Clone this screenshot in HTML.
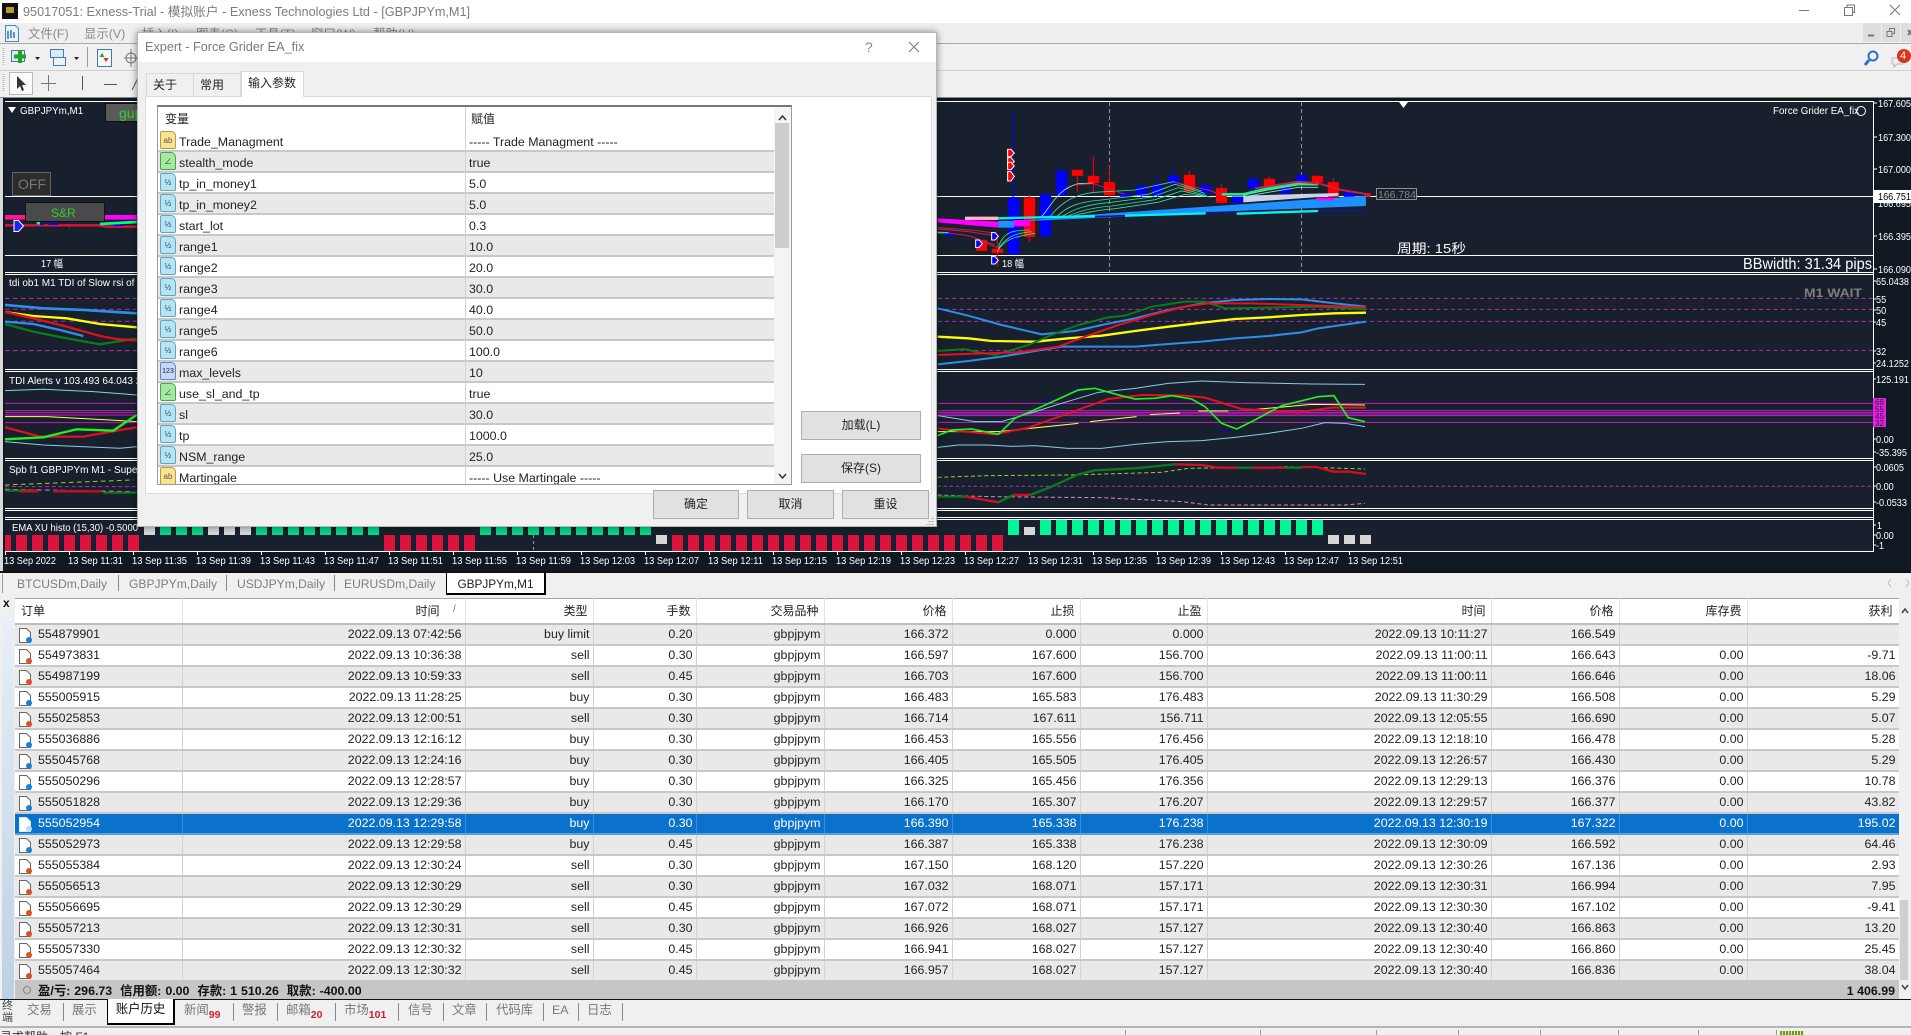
<!DOCTYPE html>
<html lang="zh"><head><meta charset="utf-8"><title>95017051: Exness-Trial</title>
<style>
*{box-sizing:border-box}
html,body{margin:0;padding:0;width:1911px;height:1035px;overflow:hidden;background:#f0f0f0;font-family:"Liberation Sans","Noto Sans CJK SC",sans-serif;font-size:12.4px;color:#222}
.a{position:absolute}
.t{position:absolute;white-space:nowrap}
#title{left:23px;top:4px;font-size:12.7px;color:#7c7c7c;line-height:16px}
.menu{top:26px;font-size:12.4px;color:#8a8a8a;line-height:16px}
#charts{position:absolute;left:0;top:0;z-index:1}
#charts text{font-family:"Liberation Sans","Noto Sans CJK SC",sans-serif;fill:#fff;font-size:10px}
#dlg{position:absolute;left:137px;top:32px;width:800px;height:495px;background:#f0f0f0;border:1px solid #b5b5b5;z-index:5;box-shadow:0 0 7px rgba(0,0,0,.45)}
#dlgt{position:absolute;left:0;top:0;width:798px;height:29px;background:#fff}
.tab{position:absolute;top:40px;height:24px;background:#f0f0f0;border:1px solid #d9d9d9;border-bottom:none;text-align:left;padding-left:6px;line-height:22px;font-size:12px;color:#222}
#panel{position:absolute;left:7px;top:63px;width:787px;height:398px;background:#fff;border:1px solid #dcdcdc}
#grid{position:absolute;left:11px;top:8px;width:635px;height:380px;border:1px solid #9a9a9a;border-top:2px solid #777;background:#fff;overflow:hidden}
#gh{position:absolute;left:0;top:0;width:616px;height:24px;line-height:25px;font-size:12px}
#rows{position:absolute;left:0;top:24px;width:616px}
.r{position:relative;height:21px;border-bottom:2px solid #c8c8c8;line-height:22px;background:#fff;white-space:nowrap}
.r.g{background:#e9e9e9}
.r b{font-weight:normal;position:absolute;left:21px;top:0}
.r u{text-decoration:none;position:absolute;left:311px;top:0}
.ic{position:absolute;left:2px;top:0;width:16px;height:18px;border:1px solid #5fa5bf;background:#b7e4f2;font-style:normal;font-size:8px;line-height:17px;text-align:center;color:#246;border-radius:2px 5px 2px 2px}
.ic.y{background:#f7e595;border-color:#b8993a;color:#654}
.ic.s{background:#a6e8a0;border-color:#4aa34a;color:#143}
.ic.n{background:#c4d8f6;border-color:#6186bd;color:#124;font-size:7px}
#vdiv{position:absolute;left:307px;top:0;width:1px;height:380px;background:#d2d2d2}
.btn{position:absolute;background:#e1e1e1;border:1px solid #adadad;text-align:center;font-size:12px;line-height:26px;color:#222}
#tbl{position:absolute;left:15px;top:598px;width:1884px;border-collapse:collapse;table-layout:fixed;background:#fff;z-index:2}
#tbl th{height:25px;font-weight:normal;font-size:12px;text-align:right;padding:0 5px 0 0;border-right:1px solid #e3e3e3;border-top:1px solid #a6a6a6;border-bottom:2px solid #bdbdbd;background:#fff;color:#222}
#tbl td{height:21px;padding:0 3px 0 0;text-align:right;border-right:1px solid #d2d2d2;border-bottom:2px solid #c8c8c8;line-height:18px;white-space:nowrap;overflow:hidden}
#tbl tr.g td{background:#e9e9e9}
#tbl tr.sel td{background:#0a72cc;color:#fff;border-right-color:#3a8dd6;border-bottom-color:#5a9fd8}
#tbl td:first-child{text-align:left;padding-left:23px;position:relative}
#tbl th:first-child{text-align:left;padding-left:6px}
#tbl td svg{position:absolute;left:3px;top:2px}
.ct{position:absolute;top:574px;height:22px;line-height:21px;color:#7d7d7d;font-size:12.1px;z-index:2}
.bt{position:absolute;top:1000px;height:22px;line-height:20px;color:#777;font-size:12.4px;z-index:2}
.bt sub{color:#d3202c;font-size:10.5px;font-weight:bold;vertical-align:-4px;line-height:0}
.sp{position:absolute;top:1003px;width:1px;height:18px;background:#888;z-index:2}
.sb{position:absolute;top:1030px;width:1px;height:5px;background:#999}
</style></head><body>

<!-- title bar -->
<div class="a" style="left:0;top:0;width:1911px;height:23px;background:#fff"></div>
<div class="t" id="title">95017051: Exness-Trial - 模拟账户 - Exness Technologies Ltd - [GBPJPYm,M1]</div>
<div class="a" style="left:2px;top:3px;width:16px;height:16px;background:#111"></div>
<div class="a" style="left:6px;top:7px;width:8px;height:6px;background:#b89a25"></div>
<svg class="a" style="left:1790px;top:0" width="121" height="23"><path d="M9 10.5h10M54.5 7.5h8v8h-8zM57 7.5v-2.500h7.500v7.500h-2M100 5l10 10M110 5l-10 10" fill="none" stroke="#777"/></svg>

<!-- menu bar -->
<div class="a" style="left:0;top:23px;width:1911px;height:20px;background:#efefef"></div>
<div class="a" style="left:0;top:43px;width:1911px;height:1px;background:#aaa"></div>
<svg class="a" style="left:4px;top:25px" width="16" height="17"><path d="M1.500 .5h10l3 3v13h-13z" fill="#eaf2fb" stroke="#4b84c4"/><path d="M4 6v8M7 5v8M10 7v6" stroke="#3070b0" stroke-width="1.500"/></svg>
<div class="t menu" style="left:28px">文件(F)</div><div class="t menu" style="left:84px">显示(V)</div>
<div class="t menu" style="left:142px">插入(I)</div><div class="t menu" style="left:196px">图表(C)</div><div class="t menu" style="left:255px">工具(T)</div><div class="t menu" style="left:311px">窗口(W)</div><div class="t menu" style="left:373px">帮助(H)</div>
<div class="a" style="left:1863px;top:23px;width:18px;height:19px;background:#dedede"></div>
<div class="a" style="left:1882px;top:23px;width:18px;height:19px;background:#dedede"></div>
<div class="a" style="left:1901px;top:23px;width:10px;height:19px;background:#dedede"></div>
<svg class="a" style="left:1863px;top:23px" width="48" height="19"><path d="M5 12.500h6" stroke="#777" stroke-width="2"/><path d="M24 8.500h5v5h-5zM26.500 8v-2.500h5v5h-2" fill="none" stroke="#777"/><path d="M45 7l4 5M49 7l-4 5" stroke="#777" stroke-width="2"/></svg>

<!-- toolbars -->
<div class="a" style="left:0;top:70px;width:1911px;height:1px;background:#d0d0d0"></div>
<svg class="a" style="left:0;top:44px" width="180" height="53">
<path d="M3.500 4v18M3.500 30v18" stroke="#bbb" stroke-dasharray="1 1" stroke-width="2"/>
<rect x="11.500" y="6.500" width="13" height="11" fill="#dbe9f8" stroke="#4579b5"/>
<path d="M20 6v13M14 12.500h12" stroke="#1ea51e" stroke-width="4"/>
<path d="M35 13h5l-2.500 3z" fill="#222"/>
<rect x="50.500" y="5.500" width="13" height="8" fill="#dbe9f8" stroke="#4579b5"/><rect x="53.500" y="13.500" width="12" height="8" fill="#eef4fb" stroke="#4579b5"/>
<path d="M74 13h5l-2.500 3z" fill="#222"/>
<path d="M87.500 3v20" stroke="#999"/>
<rect x="97.500" y="5.500" width="14" height="17" fill="#f4f8fd" stroke="#4579b5"/>
<path d="M102 9l-2.500 4h5z" fill="#1ea51e"/><path d="M106 18l-2.500-4h5z" fill="#d2341e"/>
<circle cx="131" cy="14" r="5" fill="none" stroke="#777"/><path d="M131 5v18M124 14h14" stroke="#777"/>
<rect x="9.500" y="28.500" width="23" height="22" fill="#fafafa" stroke="#b8b8b8"/>
<path d="M17 32l0 13 3-3 2 5 2-1-2-5h4z" fill="#333"/>
<path d="M48.500 31v16M41 39.500h15" stroke="#777"/><path d="M82.500 32v14" stroke="#555"/><path d="M104 40.500h13" stroke="#555"/><path d="M132 46l6-12" stroke="#555"/>
</svg>
<svg class="a" style="left:1860px;top:48px" width="51" height="20">
<circle cx="13" cy="8" r="4.500" fill="none" stroke="#2a6fc9" stroke-width="2"/><path d="M9 12l-4 5" stroke="#2a6fc9" stroke-width="3"/>
<path d="M32 10h11v6h-6l-3 3v-3h-2z" fill="#eee" stroke="#bbb"/>
<circle cx="44" cy="8" r="7" fill="#d9341e"/></svg>
<div class="t" style="left:1900px;top:50px;color:#fff;font-size:11px;line-height:13px">4</div>

<!-- charts -->
<svg id="charts" width="1911" height="1035" viewBox="0 0 1911 1035">
<defs>
<pattern id="pr" patternUnits="userSpaceOnUse" width="16" height="40" x="0" y="0"><rect width="11" height="40" fill="#dc143c"/></pattern>
<pattern id="pg" patternUnits="userSpaceOnUse" width="16" height="40" x="0" y="0"><rect width="11" height="40" fill="#05f59b"/></pattern>
<pattern id="pd" patternUnits="userSpaceOnUse" width="16" height="40" x="0" y="0"><rect width="11" height="40" fill="#00d888"/></pattern>
<pattern id="pk" patternUnits="userSpaceOnUse" width="16" height="40" x="0" y="0"><rect width="11" height="40" fill="#d6d6d6"/></pattern>
</defs>
<rect x="0" y="97" width="1911" height="476" fill="#101822"/>
<rect x="0" y="97" width="3" height="476" fill="#d8d8d8"/>
<rect x="0" y="97" width="1911" height="1" fill="#888"/>
<rect x="5" y="101" width="1868" height="451" fill="#17202c"/>

<!-- horizontal frames -->
<g fill="#fff">
<rect x="5" y="101" width="1868" height="1"/><rect x="5" y="196" width="1868" height="1"/><rect x="5" y="255" width="1868" height="1"/>
<rect x="5" y="272" width="1868" height="1"/><rect x="5" y="274" width="1868" height="1"/>
<rect x="5" y="369" width="1868" height="1"/><rect x="5" y="371" width="1868" height="1"/>
<rect x="5" y="458" width="1868" height="1"/><rect x="5" y="460" width="1868" height="1"/>
<rect x="5" y="508" width="1868" height="1"/><rect x="5" y="510" width="1868" height="1"/>
<rect x="5" y="517" width="1868" height="1"/><rect x="5" y="519" width="1868" height="1"/>
<rect x="5" y="551" width="1868" height="1"/><rect x="1873" y="101" width="1" height="451"/>
</g>

<!-- period separators -->
<path d="M1109.500 102v170M1301.500 102v170" stroke="#8a8f95" stroke-dasharray="4 3"/>
<path d="M533.500 535v16" stroke="#8a8f95" stroke-dasharray="3 3"/>

<!-- left panels (zoom coordinates) -->
<g transform="translate(0,100) scale(.3333)" fill="none">
<path d="M15 352H310" stroke="#ff1493" stroke-width="14"/><path d="M310 352H410" stroke="#ff00ff" stroke-width="14"/>
<path d="M15 376H300L320 380H410" stroke="#dc143c" stroke-width="7"/>
<path d="M110 372h22M145 372h30M340 376h30" stroke="#0000ff" stroke-width="5"/><path d="M110 370h10M300 372L410 366" stroke="#00ff7f" stroke-width="8"/>
<path d="M208 372v12" stroke="#dc143c" stroke-width="3"/>
<path d="M15 595H410M15 628H410M15 664H410M15 752H410" stroke="#b030b0" stroke-width="3" stroke-dasharray="14 10"/>
<path d="M15 615L130 625L250 630L410 640" stroke="#2d8fe8" stroke-width="8"/>
<path d="M15 636L100 648L200 655L300 672L410 682" stroke="#ffff00" stroke-width="7"/>
<path d="M15 665L100 672L180 690L250 708" stroke="#2d8fe8" stroke-width="7"/>
<path d="M15 672L100 695L200 715L300 733L350 725L410 716" stroke="#0a7a1a" stroke-width="7"/>
<path d="M15 636L100 655L200 680L300 708L350 717L410 722" stroke="#e01020" stroke-width="7"/>
<path d="M15 872L130 868L280 875L410 885M15 1025L130 1035L360 1045L410 1040" stroke="#87cde8" stroke-width="3"/>
<path d="M15 910H410M15 932H410M15 938H410M15 945H410M15 968H410" stroke="#c020c0" stroke-width="3"/>
<path d="M15 950L140 950L330 960L410 965" stroke="#ffff66" stroke-width="3"/>
<path d="M15 982L120 1010L250 1010L350 992L410 982" stroke="#e01020" stroke-width="7"/>
<path d="M15 1018L130 1012L230 988L340 992L410 945" stroke="#22ee22" stroke-width="7"/>
<path d="M15 1155L400 1140" stroke="#9acd32" stroke-width="3" stroke-dasharray="14 10"/>
<path d="M15 1160H410" stroke="#b030b0" stroke-width="3" stroke-dasharray="12 8"/>
<path d="M15 1168L400 1175" stroke="#e088c0" stroke-width="3" stroke-dasharray="14 10"/>
<path d="M15 1172H110M160 1174H250M310 1178H410" stroke="#0a7a1a" stroke-width="7"/><path d="M60 1174H115M160 1174H305" stroke="#c01020" stroke-width="7"/>
</g>
<path d="M14 220.500h4.500l5 5.500-5 5.500H14z" fill="#2020ff" stroke="#fff"/>

<!-- main candles (zoom coordinates) -->
<g transform="translate(935,105) scale(.3333)">
<g fill="#0000ff" stroke="#0000ff">
<path d="M234.500 18V448" stroke-width="3"/><rect x="219" y="278" width="33" height="170"/>
<path d="M331 268V405" stroke-width="3"/><rect x="315" y="268" width="33" height="124"/>
<path d="M379 185V270" stroke-width="3"/><rect x="363" y="198" width="33" height="72"/>
<rect x="555" y="265" width="33" height="10"/><path d="M619 235V290" stroke-width="3"/><rect x="603" y="243" width="33" height="29"/>
<path d="M667 208V280" stroke-width="3"/><rect x="651" y="240" width="33" height="30"/>
<path d="M715 190V240" stroke-width="3"/><rect x="699" y="213" width="33" height="22"/>
<rect x="795" y="240" width="33" height="25"/><rect x="891" y="275" width="33" height="18"/>
<path d="M955 220V275" stroke-width="3"/><rect x="939" y="222" width="33" height="28"/>
<rect x="1035" y="238" width="33" height="27"/><rect x="1083" y="210" width="33" height="20"/><rect x="1227" y="262" width="33" height="13"/>
<rect x="28" y="385" width="33" height="8"/>
</g>
<g fill="#ff0000" stroke="#ff0000">
<rect x="123" y="405" width="33" height="32"/><path d="M187 400V485" stroke-width="3"/><rect x="171" y="432" width="33" height="11"/>
<path d="M283 268V412" stroke-width="3"/><rect x="267" y="278" width="33" height="117"/>
<path d="M427 195V262" stroke-width="3"/><rect x="411" y="195" width="33" height="17"/>
<path d="M475 155V262" stroke-width="3"/><rect x="459" y="213" width="33" height="21"/>
<path d="M523 182V275" stroke-width="3"/><rect x="507" y="232" width="33" height="38"/>
<path d="M763 198V262" stroke-width="3"/><rect x="747" y="210" width="33" height="50"/>
<path d="M859 238V296" stroke-width="3"/><rect x="843" y="250" width="33" height="43"/>
<path d="M1003 215V250" stroke-width="3"/><rect x="987" y="222" width="33" height="28"/>
<path d="M1147 210V232" stroke-width="3"/><rect x="1131" y="213" width="33" height="19"/>
<path d="M1195 220V275" stroke-width="3"/><rect x="1179" y="232" width="33" height="43"/>
<rect x="1291" y="265" width="16" height="10"/>
</g>
<path d="M8 340L190 350V368L8 352Z" fill="#ff00ff"/>
<path d="M90 335H190V345H90Z" fill="#ffb6c1"/>
<path d="M190 348H237V368H190Z" fill="#1e90ff"/>
<path d="M237 345H285V364H237Z" fill="#ff00ff"/>
<path d="M285 345L480 328L1293 272V303L800 322L570 335L285 348Z" fill="#1e90ff"/>
<path d="M925 272L1210 264V272L925 292Z" fill="#c8d3ea"/><path d="M1145 278H1197V286H1145Z" fill="#ff00ff"/>
<g fill="none">
<path d="M190 340L480 333M570 332L812 325M905 326L1150 318" stroke="#00f5f5" stroke-width="7"/>
<path d="M480 335L570 332M815 323H905M1150 318H1290" stroke="#0a1a90" stroke-width="5"/>
<path d="M8 372L100 380L180 392M8 380L100 392L180 420M8 368L120 376L185 385M120 400L190 430" stroke="#c71f4a" stroke-width="3"/>
<path d="M8 383H40" stroke="#2ee89a" stroke-width="4"/>
<path d="M190 425C205 385,225 375,285 375M190 430C215 395,240 385,290 380M187 440C205 405,235 395,300 385" stroke="#3cdc96" stroke-width="2.500"/>
<path d="M320 335C350 300,370 250,430 236L475 234" stroke="#9fe8e0" stroke-width="2.500"/>
<path d="M345 335C380 290,420 268,480 262L600 255L715 230L800 258" stroke="#3cdc96" stroke-width="2.500"/>
<path d="M365 335C400 300,440 290,500 285L640 268L720 238L810 265" stroke="#3cdc96" stroke-width="2.500"/>
<path d="M380 335C420 310,460 298,520 293L650 276L730 248L815 272" stroke="#3cdc96" stroke-width="2.500"/>
<path d="M395 335C430 318,470 308,530 303L660 284L740 258L820 275" stroke="#3cdc96" stroke-width="2.500"/>
<path d="M405 335C440 325,480 316,540 311L670 292L750 268L830 276" stroke="#3cdc96" stroke-width="2.500"/>
<path d="M860 268H925L1000 250L1090 235L1150 235" stroke="#1ae88a" stroke-width="8"/>
<path d="M925 276L1000 262L1090 247L1150 247M925 270L1000 255L1090 240L1150 240" stroke="#7ff0c0" stroke-width="2.500"/>
<path d="M420 240L475 236L570 268M720 232L830 258L860 272" stroke="#c71f4a" stroke-width="3"/>
<path d="M960 250L1090 230L1150 235L1220 255L1300 268" stroke="#c71f4a" stroke-width="6"/>
</g>
<g fill="#ff0000" stroke="#fff" stroke-width="3">
<path d="M218 133h10l10 11-10 11h-10z"/><path d="M218 158h10l10 11-10 11h-10z"/><path d="M218 172h10l10 11-10 11h-10z"/><path d="M218 200h10l10 14-10 14h-10z"/>
</g>
<g fill="#0000ff" stroke="#fff" stroke-width="3">
<path d="M122 405h10l10 11-10 11h-10z"/><path d="M170 383h10l10 11-10 11h-10z"/><path d="M170 455h10l10 11-10 11h-10z"/>
</g>
</g>
<text x="1002" y="267" textLength="22" lengthAdjust="spacingAndGlyphs" style="font-size:10.500px">18 幅</text>
<text x="41" y="267" textLength="22" lengthAdjust="spacingAndGlyphs" style="font-size:10.500px">17 幅</text>

<!-- subwindow 1 right -->
<g transform="translate(935,275) scale(.3333)" fill="none">
<path d="M8 70H2814M8 103H2814M8 139H2814M8 226H2814" stroke="#b030b0" stroke-width="3" stroke-dasharray="12 10"/>
<path d="M8 100L100 122L200 150L320 178L420 168L500 150L600 130L700 105L800 85L900 75L1000 72L1100 73L1200 85L1293 95" stroke="#2d8fe8" stroke-width="6"/>
<path d="M8 185L100 190L170 198L300 200L400 190L500 182L600 168L700 155L800 143L900 132L1000 127L1100 120L1200 115L1293 113" stroke="#ffff00" stroke-width="7"/>
<path d="M8 268L100 258L200 245L300 228L380 215L600 215L700 207L800 200L900 190L1000 183L1100 172L1150 160L1293 140" stroke="#2d8fe8" stroke-width="6"/>
<path d="M8 228L90 222L130 232L180 240L280 210L350 180L430 150L520 127L570 122L650 95L750 80L810 80L870 100L1000 98L1150 95L1293 103" stroke="#0a7a1a" stroke-width="6"/>
<path d="M8 240L140 235L250 232L370 215L450 185L550 150L650 120L750 95L820 85L950 85L1150 92L1293 97" stroke="#e81020" stroke-width="6"/>
<!-- subwindow 2 right -->
<path d="M8 385H2814M8 407H2814M8 412H2814M8 417H2814M8 422H2814M8 442H2814" stroke="#c020c0" stroke-width="3"/>
<path d="M8 422L120 440L200 440L300 410L380 385L490 352L600 340L700 325L800 318L930 323L1130 327L1290 328" stroke="#87cde8" stroke-width="3"/>
<path d="M8 517L70 510L160 510L230 514L300 512L400 520L500 520L600 508L700 500L800 497L900 487L1000 475L1100 460L1170 443L1230 445L1290 455" stroke="#87cde8" stroke-width="3"/>
<path d="M8 470L190 470L430 445M465 440L605 425M645 419L735 414M790 408L880 408M945 405L1130 388L1290 390" stroke="#ffff66" stroke-width="3"/>
<path d="M320 380L355 370M415 345L440 335M850 470L890 465M1040 390L1090 382" stroke="#101080" stroke-width="5"/>
<path d="M8 460L70 468L180 478L280 458L400 415L520 372L620 360L750 362L810 368L920 402L1090 412L1190 398L1293 398" stroke="#e81020" stroke-width="6"/>
<path d="M8 482L50 465L110 462L190 478L240 430L320 395L430 345L480 340L550 360L600 372L660 370L710 362L770 372L810 395L860 445L905 462L950 440L1040 392L1150 365L1197 362L1240 428L1290 440" stroke="#22ee22" stroke-width="5"/>
<!-- subwindow 3 right -->
<path d="M8 607L160 602L410 600L680 592L760 580L1060 575L1290 582" stroke="#9acd32" stroke-width="3" stroke-dasharray="12 8"/>
<path d="M8 634H2814" stroke="#b030b0" stroke-width="3" stroke-dasharray="10 8"/>
<path d="M8 660L160 665L500 668L740 680L820 690L1230 690L1290 685" stroke="#e088c0" stroke-width="3" stroke-dasharray="12 8"/>
<path d="M8 665H90M190 682L235 660M285 660L350 635L430 598L480 586L600 580L720 568M905 578H955M1050 578H1100" stroke="#0a7a1a" stroke-width="7"/>
<path d="M90 665L190 682M235 660H285M720 568L800 570L850 578L905 578M955 578H1050M1100 576H1145L1195 590L1240 590L1293 597" stroke="#d01020" stroke-width="7"/>
</g>

<!-- histogram -->
<rect x="5" y="535" width="6" height="16" fill="#dc143c"/>
<rect x="16" y="535" width="123" height="16" fill="url(#pr)"/>
<rect x="384" y="535" width="91" height="16" fill="url(#pr)"/>
<rect x="672" y="535" width="331" height="16" fill="url(#pr)"/>
<rect x="160" y="520" width="43" height="15" fill="url(#pd)"/>
<rect x="256" y="520" width="123" height="15" fill="url(#pd)"/>
<rect x="480" y="520" width="171" height="15" fill="url(#pd)"/>
<rect x="1008" y="520" width="11" height="15" fill="#05f59b"/>
<rect x="1040" y="520" width="283" height="15" fill="url(#pg)"/>
<rect x="144" y="527" width="11" height="8" fill="#d6d6d6"/><rect x="208" y="527" width="43" height="8" fill="url(#pk)"/>
<rect x="1024" y="527" width="11" height="8" fill="#d6d6d6"/>
<rect x="656" y="535" width="11" height="9" fill="#d6d6d6"/>
<rect x="1328" y="535" width="43" height="9" fill="url(#pk)"/>

<!-- price axis -->
<path d="M1874 103h3M1874 137h3M1874 169h3M1874 236h3M1874 269h3M1874 281h2M1874 299h2M1874 310h2M1874 322h2M1874 351h2M1874 363h2M1874 379h2M1874 439h2M1874 452h2M1874 467h2M1874 486h2M1874 502h2M1874 525h2M1874 535h2M1874 545h2" stroke="#fff"/>
<g transform="translate(1878 0) scale(.87 1)">
<text x="0" y="107" style="font-size:10.500px">167.605</text><text x="0" y="141" style="font-size:10.500px">167.300</text><text x="0" y="173" style="font-size:10.500px">167.000</text>
<text x="0" y="207" style="font-size:10.500px">166.695</text><text x="0" y="240" style="font-size:10.500px">166.395</text><text x="0" y="273" style="font-size:10.500px">166.090</text>
</g>
<g transform="translate(1876 0) scale(.87 1)">
<text x="0" y="285" style="font-size:10.500px">65.0438</text><text x="0" y="303" style="font-size:10.500px">55</text><text x="0" y="314" style="font-size:10.500px">50</text><text x="0" y="326" style="font-size:10.500px">45</text><text x="0" y="355" style="font-size:10.500px">32</text><text x="0" y="367" style="font-size:10.500px">24.1252</text>
<text x="0" y="383" style="font-size:10.500px">125.191</text><text x="0" y="443" style="font-size:10.500px">0.00</text><text x="0" y="456" style="font-size:10.500px">-35.395</text>
<text x="0" y="471" style="font-size:10.500px">0.0605</text><text x="0" y="490" style="font-size:10.500px">0.00</text><text x="0" y="506" style="font-size:10.500px">-0.0533</text>
<text x="1" y="529" style="font-size:10.500px">1</text><text x="0" y="539" style="font-size:10.500px">0.00</text><text x="0" y="549" style="font-size:10.500px">-1</text>
</g>
<rect x="1873" y="190" width="38" height="13" fill="#fff"/>
<g transform="translate(1878 0) scale(.87 1)"><text x="0" y="200" style="fill:#000;font-size:10.500px">166.751</text></g>
<rect x="1873" y="398" width="13" height="29" fill="#e61ee6"/>
<g><text x="1875" y="405" style="fill:#222;font-size:8px">68</text><text x="1875" y="412" style="fill:#222;font-size:8px">55</text><text x="1875" y="419" style="fill:#222;font-size:8px">45</text><text x="1875" y="426" style="fill:#222;font-size:8px">32</text></g>

<!-- chart annotations -->
<path d="M1399 102h9l-4.500 6z" fill="#fff"/>
<rect x="1376.500" y="188.500" width="40" height="11" fill="#17202c" stroke="#8f8f8f"/>
<text x="1378" y="198" style="fill:#8a8a8a;font-size:10.500px">166.784</text>
<text x="1773" y="114" style="font-size:9.800px">Force Grider EA_fix</text>
<circle cx="1861" cy="111" r="4.500" fill="none" stroke="#fff"/>
<text x="1397" y="253" textLength="69" lengthAdjust="spacingAndGlyphs" style="font-size:13px">周期: 15秒</text>
<text x="1743" y="269" textLength="129" lengthAdjust="spacingAndGlyphs" style="font-size:16px">BBwidth: 31.34 pips</text>
<text x="1804" y="297" textLength="58" lengthAdjust="spacingAndGlyphs" style="font-size:12px;font-weight:bold;fill:#7e7e7e">M1 WAIT</text>

<!-- left overlays -->
<path d="M8 107h8l-4 6z" fill="#fff"/>
<text x="20" y="114" style="font-size:9.800px">GBPJPYm,M1</text>
<rect x="105.500" y="103.500" width="40" height="18" fill="#5a5a5a" stroke="#111"/>
<text x="119" y="118" style="font-size:14px;fill:#32cd32">gup</text>
<rect x="12.500" y="172.500" width="38" height="23" fill="#2c2c2c" stroke="#666"/>
<text x="18" y="189" style="font-size:14px;fill:#777">OFF</text>
<rect x="25.500" y="202.500" width="79" height="19" fill="#4a4a4a" stroke="#111"/>
<text x="51" y="217" style="font-size:12px;fill:#32cd32">S&amp;R</text>
<text x="9" y="286" style="font-size:10px">tdi ob1 M1 TDI of Slow rsi of 14</text>
<text x="9" y="384" style="font-size:10px">TDI Alerts v 103.493 64.043 26.1</text>
<text x="9" y="473" style="font-size:10px">Spb f1 GBPJPYm M1 - Super pro</text>
<text x="12" y="531" textLength="126" lengthAdjust="spacingAndGlyphs" style="font-size:10px">EMA  XU histo (15,30) -0.5000</text>

<!-- time axis -->
<path d="M5.500 551v4M69.500 551v4M133.500 551v4M197.500 551v4M261.500 551v4M325.500 551v4M389.500 551v4M453.500 551v4M517.500 551v4M581.500 551v4M645.500 551v4M709.500 551v4M773.500 551v4M837.500 551v4M901.500 551v4M965.500 551v4M1029.500 551v4M1093.500 551v4M1157.500 551v4M1221.500 551v4M1285.500 551v4M1349.500 551v4" stroke="#fff"/>
<g>
<text x="4" y="564" textLength="52" lengthAdjust="spacingAndGlyphs">13 Sep 2022</text>
<text x="68" y="564" textLength="55" lengthAdjust="spacingAndGlyphs">13 Sep 11:31</text>
<text x="132" y="564" textLength="55" lengthAdjust="spacingAndGlyphs">13 Sep 11:35</text>
<text x="196" y="564" textLength="55" lengthAdjust="spacingAndGlyphs">13 Sep 11:39</text>
<text x="260" y="564" textLength="55" lengthAdjust="spacingAndGlyphs">13 Sep 11:43</text>
<text x="324" y="564" textLength="55" lengthAdjust="spacingAndGlyphs">13 Sep 11:47</text>
<text x="388" y="564" textLength="55" lengthAdjust="spacingAndGlyphs">13 Sep 11:51</text>
<text x="452" y="564" textLength="55" lengthAdjust="spacingAndGlyphs">13 Sep 11:55</text>
<text x="516" y="564" textLength="55" lengthAdjust="spacingAndGlyphs">13 Sep 11:59</text>
<text x="580" y="564" textLength="55" lengthAdjust="spacingAndGlyphs">13 Sep 12:03</text>
<text x="644" y="564" textLength="55" lengthAdjust="spacingAndGlyphs">13 Sep 12:07</text>
<text x="708" y="564" textLength="55" lengthAdjust="spacingAndGlyphs">13 Sep 12:11</text>
<text x="772" y="564" textLength="55" lengthAdjust="spacingAndGlyphs">13 Sep 12:15</text>
<text x="836" y="564" textLength="55" lengthAdjust="spacingAndGlyphs">13 Sep 12:19</text>
<text x="900" y="564" textLength="55" lengthAdjust="spacingAndGlyphs">13 Sep 12:23</text>
<text x="964" y="564" textLength="55" lengthAdjust="spacingAndGlyphs">13 Sep 12:27</text>
<text x="1028" y="564" textLength="55" lengthAdjust="spacingAndGlyphs">13 Sep 12:31</text>
<text x="1092" y="564" textLength="55" lengthAdjust="spacingAndGlyphs">13 Sep 12:35</text>
<text x="1156" y="564" textLength="55" lengthAdjust="spacingAndGlyphs">13 Sep 12:39</text>
<text x="1220" y="564" textLength="55" lengthAdjust="spacingAndGlyphs">13 Sep 12:43</text>
<text x="1284" y="564" textLength="55" lengthAdjust="spacingAndGlyphs">13 Sep 12:47</text>
<text x="1348" y="564" textLength="55" lengthAdjust="spacingAndGlyphs">13 Sep 12:51</text>
</g>
<rect x="0" y="571" width="1911" height="2" fill="#111"/>
</svg>

<!-- symbols for order icons -->
<svg width="0" height="0" style="position:absolute"><defs>
<symbol id="ob" viewBox="0 0 16 17"><path d="M1.500 1.500h7l4 4v10h-11z" fill="#fff" stroke="#666"/><circle cx="11" cy="13" r="3" fill="#1482d8"/></symbol>
<symbol id="os" viewBox="0 0 16 17"><path d="M1.500 1.500h7l4 4v10h-11z" fill="#fff" stroke="#666"/><circle cx="11" cy="13" r="3" fill="#e2501e"/></symbol>
<symbol id="ow" viewBox="0 0 16 17"><path d="M1.500 1.500h7l4 4v10h-11z" fill="#fff" stroke="#dfeaf6"/><circle cx="11" cy="13" r="3" fill="#bcd8f4"/></symbol>
</defs></svg>

<!-- chart tabs -->
<div class="a" style="left:0;top:573px;width:1911px;height:25px;background:#f0f0f0;z-index:1"></div>
<div class="a" style="left:2px;top:574px;width:1px;height:19px;background:#999;z-index:2"></div>
<div class="ct" style="left:17px">BTCUSDm,Daily</div><div class="a" style="left:118px;top:575px;width:1px;height:16px;background:#888;z-index:2"></div>
<div class="ct" style="left:129px">GBPJPYm,Daily</div><div class="a" style="left:226px;top:575px;width:1px;height:16px;background:#888;z-index:2"></div>
<div class="ct" style="left:237px">USDJPYm,Daily</div><div class="a" style="left:334px;top:575px;width:1px;height:16px;background:#888;z-index:2"></div>
<div class="ct" style="left:344px">EURUSDm,Daily</div>
<div class="ct" style="left:446px;width:100px;background:#fff;border:1px solid #000;border-top:none;border-bottom-width:2px;border-right-width:2px;color:#222;text-align:center;top:573px;line-height:22px;font-size:11.800px">GBPJPYm,M1</div>
<svg class="a" style="left:1885px;top:578px;z-index:2" width="26" height="10"><path d="M6 1L3 5l3 4M21 1l3 4-3 4" fill="none" stroke="#bbb"/></svg>

<!-- left strip -->
<div class="a" style="left:2px;top:612px;width:12px;height:388px;background:linear-gradient(#eaf0f6,#bdd0e4);z-index:2"></div>
<div class="t" style="left:3px;top:596px;font-weight:bold;font-size:12px;color:#111;z-index:2">x</div>

<!-- history table -->
<table id="tbl">
<colgroup><col style="width:167px"><col style="width:283px"><col style="width:128px"><col style="width:103px"><col style="width:128px"><col style="width:128px"><col style="width:128px"><col style="width:127px"><col style="width:284px"><col style="width:128px"><col style="width:128px"><col style="width:152px"></colgroup>
<tr><th>订单</th><th style="padding-right:25px">时间</th><th>类型</th><th>手数</th><th>交易品种</th><th>价格</th><th>止损</th><th>止盈</th><th>时间</th><th>价格</th><th>库存费</th><th style="padding-right:6px">获利</th></tr>
<tr class="g"><td><svg width="16" height="17"><use href="#ob"/></svg>554879901</td><td>2022.09.13 07:42:56</td><td>buy limit</td><td>0.20</td><td>gbpjpym</td><td>166.372</td><td>0.000</td><td>0.000</td><td>2022.09.13 10:11:27</td><td>166.549</td><td></td><td></td></tr>
<tr><td><svg width="16" height="17"><use href="#os"/></svg>554973831</td><td>2022.09.13 10:36:38</td><td>sell</td><td>0.30</td><td>gbpjpym</td><td>166.597</td><td>167.600</td><td>156.700</td><td>2022.09.13 11:00:11</td><td>166.643</td><td>0.00</td><td>-9.71</td></tr>
<tr class="g"><td><svg width="16" height="17"><use href="#os"/></svg>554987199</td><td>2022.09.13 10:59:33</td><td>sell</td><td>0.45</td><td>gbpjpym</td><td>166.703</td><td>167.600</td><td>156.700</td><td>2022.09.13 11:00:11</td><td>166.646</td><td>0.00</td><td>18.06</td></tr>
<tr><td><svg width="16" height="17"><use href="#ob"/></svg>555005915</td><td>2022.09.13 11:28:25</td><td>buy</td><td>0.30</td><td>gbpjpym</td><td>166.483</td><td>165.583</td><td>176.483</td><td>2022.09.13 11:30:29</td><td>166.508</td><td>0.00</td><td>5.29</td></tr>
<tr class="g"><td><svg width="16" height="17"><use href="#os"/></svg>555025853</td><td>2022.09.13 12:00:51</td><td>sell</td><td>0.30</td><td>gbpjpym</td><td>166.714</td><td>167.611</td><td>156.711</td><td>2022.09.13 12:05:55</td><td>166.690</td><td>0.00</td><td>5.07</td></tr>
<tr><td><svg width="16" height="17"><use href="#ob"/></svg>555036886</td><td>2022.09.13 12:16:12</td><td>buy</td><td>0.30</td><td>gbpjpym</td><td>166.453</td><td>165.556</td><td>176.456</td><td>2022.09.13 12:18:10</td><td>166.478</td><td>0.00</td><td>5.28</td></tr>
<tr class="g"><td><svg width="16" height="17"><use href="#ob"/></svg>555045768</td><td>2022.09.13 12:24:16</td><td>buy</td><td>0.30</td><td>gbpjpym</td><td>166.405</td><td>165.505</td><td>176.405</td><td>2022.09.13 12:26:57</td><td>166.430</td><td>0.00</td><td>5.29</td></tr>
<tr><td><svg width="16" height="17"><use href="#ob"/></svg>555050296</td><td>2022.09.13 12:28:57</td><td>buy</td><td>0.30</td><td>gbpjpym</td><td>166.325</td><td>165.456</td><td>176.356</td><td>2022.09.13 12:29:13</td><td>166.376</td><td>0.00</td><td>10.78</td></tr>
<tr class="g"><td><svg width="16" height="17"><use href="#ob"/></svg>555051828</td><td>2022.09.13 12:29:36</td><td>buy</td><td>0.30</td><td>gbpjpym</td><td>166.170</td><td>165.307</td><td>176.207</td><td>2022.09.13 12:29:57</td><td>166.377</td><td>0.00</td><td>43.82</td></tr>
<tr class="sel"><td><svg width="16" height="17"><use href="#ow"/></svg>555052954</td><td>2022.09.13 12:29:58</td><td>buy</td><td>0.30</td><td>gbpjpym</td><td>166.390</td><td>165.338</td><td>176.238</td><td>2022.09.13 12:30:19</td><td>167.322</td><td>0.00</td><td>195.02</td></tr>
<tr class="g"><td><svg width="16" height="17"><use href="#ob"/></svg>555052973</td><td>2022.09.13 12:29:58</td><td>buy</td><td>0.45</td><td>gbpjpym</td><td>166.387</td><td>165.338</td><td>176.238</td><td>2022.09.13 12:30:09</td><td>166.592</td><td>0.00</td><td>64.46</td></tr>
<tr><td><svg width="16" height="17"><use href="#os"/></svg>555055384</td><td>2022.09.13 12:30:24</td><td>sell</td><td>0.30</td><td>gbpjpym</td><td>167.150</td><td>168.120</td><td>157.220</td><td>2022.09.13 12:30:26</td><td>167.136</td><td>0.00</td><td>2.93</td></tr>
<tr class="g"><td><svg width="16" height="17"><use href="#os"/></svg>555056513</td><td>2022.09.13 12:30:29</td><td>sell</td><td>0.30</td><td>gbpjpym</td><td>167.032</td><td>168.071</td><td>157.171</td><td>2022.09.13 12:30:31</td><td>166.994</td><td>0.00</td><td>7.95</td></tr>
<tr><td><svg width="16" height="17"><use href="#os"/></svg>555056695</td><td>2022.09.13 12:30:29</td><td>sell</td><td>0.45</td><td>gbpjpym</td><td>167.072</td><td>168.071</td><td>157.171</td><td>2022.09.13 12:30:30</td><td>167.102</td><td>0.00</td><td>-9.41</td></tr>
<tr class="g"><td><svg width="16" height="17"><use href="#os"/></svg>555057213</td><td>2022.09.13 12:30:31</td><td>sell</td><td>0.30</td><td>gbpjpym</td><td>166.926</td><td>168.027</td><td>157.127</td><td>2022.09.13 12:30:40</td><td>166.863</td><td>0.00</td><td>13.20</td></tr>
<tr><td><svg width="16" height="17"><use href="#os"/></svg>555057330</td><td>2022.09.13 12:30:32</td><td>sell</td><td>0.45</td><td>gbpjpym</td><td>166.941</td><td>168.027</td><td>157.127</td><td>2022.09.13 12:30:40</td><td>166.860</td><td>0.00</td><td>25.45</td></tr>
<tr class="g"><td><svg width="16" height="17"><use href="#os"/></svg>555057464</td><td>2022.09.13 12:30:32</td><td>sell</td><td>0.45</td><td>gbpjpym</td><td>166.957</td><td>168.027</td><td>157.127</td><td>2022.09.13 12:30:40</td><td>166.836</td><td>0.00</td><td>38.04</td></tr>
</table>
<div class="t" style="left:437px;top:604px;font-size:10px;color:#777;z-index:3;margin-left:16px">/</div>

<!-- table scrollbar -->
<div class="a" style="left:1899px;top:598px;width:12px;height:401px;background:#f0f0f0;z-index:2"></div>
<div class="a" style="left:1900px;top:900px;width:8px;height:80px;background:#cfcfcf;z-index:2"></div>
<svg class="a" style="left:1899px;top:604px;z-index:3" width="12" height="395"><path d="M3 9l3-4 3 4M3 381l3 4 3-4" fill="none" stroke="#444" stroke-width="1.500"/></svg>

<!-- summary -->
<div class="a" style="left:15px;top:980px;width:1884px;height:19px;background:#c6c6c6;z-index:2"></div>
<div class="a" style="left:0;top:999px;width:1911px;height:1px;background:#111;z-index:2"></div>
<div class="t" style="left:23px;top:986px;width:8px;height:8px;border-radius:50%;border:1px solid #888;z-index:3"></div>
<div class="t" style="left:38px;top:983px;font-weight:bold;font-size:12.4px;line-height:16px;color:#111;z-index:3;word-spacing:.5px">盈/亏: 296.73&nbsp; 信用额: 0.00&nbsp; 存款: 1 510.26&nbsp; 取款: -400.00</div>
<div class="t" style="right:16px;top:983px;font-weight:bold;font-size:12.4px;line-height:16px;color:#111;z-index:3">1 406.99</div>

<!-- terminal tabs -->
<div class="a" style="left:2px;top:1000px;width:12px;font-size:11px;line-height:12px;color:#444;z-index:3;white-space:normal">终端</div>
<div class="bt" style="left:27px">交易</div><div class="sp" style="left:63px"></div>
<div class="bt" style="left:72px">展示</div>
<div class="bt" style="left:107px;top:999px;width:68px;height:26px;background:#fff;border:1px solid #000;border-top:none;border-bottom-width:2px;border-right-width:2px;color:#111;text-align:center;line-height:21px">账户历史</div>
<div class="bt" style="left:184px">新闻<sub>99</sub></div><div class="sp" style="left:233px"></div>
<div class="bt" style="left:242px">警报</div><div class="sp" style="left:277px"></div>
<div class="bt" style="left:286px">邮箱<sub>20</sub></div><div class="sp" style="left:335px"></div>
<div class="bt" style="left:344px">市场<sub>101</sub></div><div class="sp" style="left:398px"></div>
<div class="bt" style="left:408px">信号</div><div class="sp" style="left:443px"></div>
<div class="bt" style="left:452px">文章</div><div class="sp" style="left:486px"></div>
<div class="bt" style="left:496px">代码库</div><div class="sp" style="left:543px"></div>
<div class="bt" style="left:552px">EA</div><div class="sp" style="left:578px"></div>
<div class="bt" style="left:587px">日志</div><div class="sp" style="left:622px"></div>

<!-- status bar -->
<div class="a" style="left:0;top:1026px;width:1911px;height:2px;background:#b5b5b5"></div>
<div class="a" style="left:0;top:1030px;width:110px;height:5px;overflow:hidden;font-size:12px;line-height:14px;color:#333">寻求帮助，按 F1</div>
<div class="sb" style="left:1125px"></div><div class="sb" style="left:1260px"></div><div class="sb" style="left:1376px"></div><div class="sb" style="left:1458px"></div><div class="sb" style="left:1540px"></div><div class="sb" style="left:1618px"></div><div class="sb" style="left:1698px"></div><div class="sb" style="left:1776px"></div>
<div class="a" style="left:1780px;top:1031px;width:24px;height:4px;background:repeating-linear-gradient(90deg,#6a9a1e 0 2px,#d8e8b8 2px 3px)"></div>

<!-- dialog -->
<div id="dlg">
<div id="dlgt"></div>
<div class="t" style="left:7px;top:6px;font-size:12.700px;line-height:17px;color:#7a7a7a">Expert - Force Grider EA_fix</div>
<div class="t" style="left:727px;top:6px;font-size:14px;line-height:17px;color:#888">?</div>
<svg class="a" style="left:770px;top:8px" width="12" height="12"><path d="M1 1l10 10M11 1L1 11" stroke="#777"/></svg>
<div class="tab" style="left:8px;width:48px">关于</div>
<div class="tab" style="left:55px;width:48px">常用</div>
<div class="tab" style="left:103px;width:63px;top:38px;height:26px;background:#fff;z-index:2;line-height:23px">输入参数</div>
<div id="panel">
 <div id="grid">
  <div id="gh"><span class="t" style="left:7px">变量</span><span class="t" style="left:313px">赋值</span></div>
  <div id="rows">
  <div class="r"><i class="ic y">ab</i><b>Trade_Managment</b><u>----- Trade Managment -----</u></div>
  <div class="r g"><i class="ic s">∠</i><b>stealth_mode</b><u>true</u></div>
  <div class="r"><i class="ic">½</i><b>tp_in_money1</b><u>5.0</u></div>
  <div class="r g"><i class="ic">½</i><b>tp_in_money2</b><u>5.0</u></div>
  <div class="r"><i class="ic">½</i><b>start_lot</b><u>0.3</u></div>
  <div class="r g"><i class="ic">½</i><b>range1</b><u>10.0</u></div>
  <div class="r"><i class="ic">½</i><b>range2</b><u>20.0</u></div>
  <div class="r g"><i class="ic">½</i><b>range3</b><u>30.0</u></div>
  <div class="r"><i class="ic">½</i><b>range4</b><u>40.0</u></div>
  <div class="r g"><i class="ic">½</i><b>range5</b><u>50.0</u></div>
  <div class="r"><i class="ic">½</i><b>range6</b><u>100.0</u></div>
  <div class="r g"><i class="ic n">123</i><b>max_levels</b><u>10</u></div>
  <div class="r"><i class="ic s">∠</i><b>use_sl_and_tp</b><u>true</u></div>
  <div class="r g"><i class="ic">½</i><b>sl</b><u>30.0</u></div>
  <div class="r"><i class="ic">½</i><b>tp</b><u>1000.0</u></div>
  <div class="r g"><i class="ic">½</i><b>NSM_range</b><u>25.0</u></div>
  <div class="r"><i class="ic y">ab</i><b>Martingale</b><u>----- Use Martingale -----</u></div>
  </div>
  <div id="vdiv"></div>
  <div class="a" style="left:616px;top:0;width:17px;height:378px;background:#f4f4f4"></div>
  <div class="a" style="left:617px;top:16px;width:14px;height:125px;background:#cdcdcd"></div>
  <svg class="a" style="left:616px;top:3px" width="17" height="374"><path d="M5 10l3.500-4 3.500 4M5 364l3.500 4 3.500-4" fill="none" stroke="#333" stroke-width="1.500"/></svg>
 </div>
 <div class="btn" style="left:655px;top:314px;width:120px;height:29px">加载(L)</div>
 <div class="btn" style="left:655px;top:357px;width:120px;height:29px">保存(S)</div>
</div>
<div class="btn" style="left:515px;top:457px;width:86px;height:29px;z-index:3;border-color:#adadad">确定</div>
<div class="btn" style="left:609px;top:457px;width:87px;height:29px;z-index:3">取消</div>
<div class="btn" style="left:704px;top:457px;width:87px;height:29px;z-index:3">重设</div>
<svg class="a" style="left:788px;top:484px" width="10" height="9"><path d="M6.500 1v1M3.500 4v1M6.500 4v1M.5 7v1M3.500 7v1M6.500 7v1" stroke="#aaa" stroke-width="2"/></svg>
</div>
</body></html>
